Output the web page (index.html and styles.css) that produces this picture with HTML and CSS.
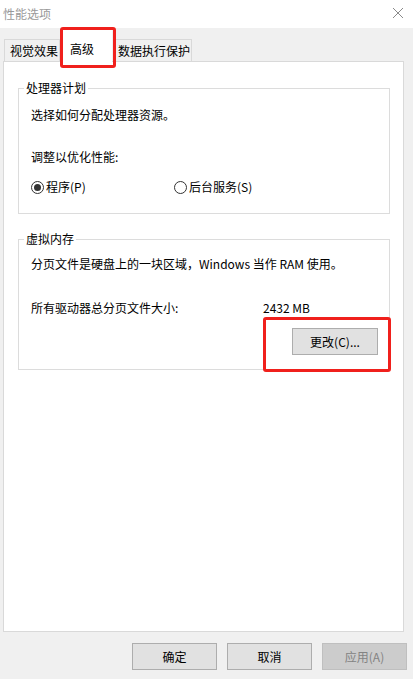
FILE: index.html
```html
<!DOCTYPE html>
<html lang="zh">
<head>
<meta charset="utf-8">
<title>性能选项</title>
<link rel="stylesheet" href="styles.css">
</head>
<body>
<div class="window">
  <div class="titlebar">
    <span class="title">性能选项</span>
    <svg class="close" width="12" height="12" viewBox="0 0 12 12"><path d="M1 1 L11 11 M11 1 L1 11" stroke="#8a8a8a" stroke-width="1" fill="none"/></svg>
  </div>
  <div class="tabs">
    <div class="tab first-tab">视觉效果</div>
    <div class="tab active">高级</div>
    <div class="tab last-tab">数据执行保护</div>
    <div class="mark mark-tab"></div>
  </div>
  <div class="panel">
    <fieldset class="group group-cpu">
      <legend>处理器计划</legend>
      <p class="line first">选择如何分配处理器资源。</p>
      <p class="line adjust">调整以优化性能:</p>
      <div class="radios">
        <label class="radio r1"><span class="dot checked"></span>程序(P)</label>
        <label class="radio r2"><span class="dot"></span>后台服务(S)</label>
      </div>
    </fieldset>
    <fieldset class="group group-mem">
      <legend>虚拟内存</legend>
      <p class="line first">分页文件是硬盘上的一块区域，Windows 当作 RAM 使用。</p>
      <div class="size-row">
        <span class="size-label">所有驱动器总分页文件大小:</span>
        <span class="size-value">2432 MB</span>
      </div>
      <div class="btn-row">
        <button class="btn change">更改(C)...</button>
        <div class="mark mark-btn"></div>
      </div>
    </fieldset>
  </div>
  <div class="footer">
    <button class="btn">确定</button>
    <button class="btn">取消</button>
    <button class="btn disabled">应用(A)</button>
  </div>
</div>
</body>
</html>
```

FILE: styles.css
```css
* { box-sizing: border-box; }
html, body { margin: 0; padding: 0; }
body {
  background: #f0f0f0;
  font-family: "Noto Sans CJK SC", "Microsoft YaHei", sans-serif;
  font-size: 12px;
  line-height: 16px;
  color: #000;
  width: 413px;
  height: 679px;
  overflow: hidden;
}
.window { width: 413px; height: 679px; display: flex; flex-direction: column; }
.titlebar {
  height: 28px;
  background: #fff;
  display: flex;
  align-items: center;
  justify-content: space-between;
  padding: 0 9px 0 3px;
}
.title { color: #999; font-size: 12px; }
.close { display: block; margin-bottom: 2px; }

.tabs {
  position: relative;
  height: 33px;
  display: flex;
  align-items: flex-end;
  padding-left: 4px;
}
.tab {
  height: 22px;
  padding: 0 1px 0 5px;
  border: 1px solid #d9d9d9;
  border-bottom: none;
  background: #f0f0f0;
  display: flex;
  align-items: center;
  position: relative;
  z-index: 1;
}
.tab.last-tab { padding: 0 1px 0 3px; }
.tab.active {
  height: 33px;
  background: #fff;
  width: 51px;
  margin: 0 2px -1px 1px;
  padding: 6px 0 0 8px;
  z-index: 2;
  border-color: #fff;
}
.mark {
  position: absolute;
  border: 3px solid #f0201c;
  border-radius: 3px;
  z-index: 5;
}
.mark-tab { left: 60px; top: -1px; width: 56px; height: 41px; }

.panel {
  margin: 0 9px 0 3px;
  height: 571px;
  background: #fff;
  border: 1px solid #d9d9d9;
  padding: 18px 13px 0 14px;
  display: flex;
  flex-direction: column;
  gap: 17px;
}
.group {
  margin: 0;
  border: 1px solid #dcdcdc;
  padding: 0 0 0 12px;
  min-width: 0;
}
.group legend {
  padding: 0 2px;
  margin-left: -7px;
  line-height: 16px;
}
.group-cpu { height: 134px; }
.group-mem { height: 139px; position: relative; }
.line { margin: 0; }
.line.first { margin-top: 11px; }
.group-mem .line.first { margin-top: 9px; }
.line.adjust { margin-top: 26px; }
.radios { display: flex; margin-top: 14px; }
.radio { display: flex; align-items: center; gap: 2px; }
.r1 { width: 143px; }
.dot {
  width: 13px; height: 13px;
  border: 1px solid #333;
  border-radius: 50%;
  display: inline-flex;
  align-items: center;
  justify-content: center;
}
.dot.checked::after {
  content: "";
  width: 7px; height: 7px;
  border-radius: 50%;
  background: #333;
}
.size-row { display: flex; margin-top: 28px; }
.size-label { width: 232px; }
.btn-row { position: relative; display: flex; justify-content: flex-end; margin-top: 12px; padding-right: 11px; }
.mark-btn { left: 232px; top: -11px; width: 128px; height: 55px; }

.btn {
  font-family: inherit;
  font-size: 12px;
  height: 27px;
  width: 85px;
  background: #e1e1e1;
  border: 1px solid #adadad;
  color: #000;
  padding: 0;
  border-radius: 0;
}
.change { width: 86px; }
.footer {
  display: flex;
  justify-content: flex-end;
  gap: 10px;
  padding: 11px 6px 0 0;
}
.btn.disabled { background: #cccccc; border-color: #bfbfbf; color: #838383; }
```
